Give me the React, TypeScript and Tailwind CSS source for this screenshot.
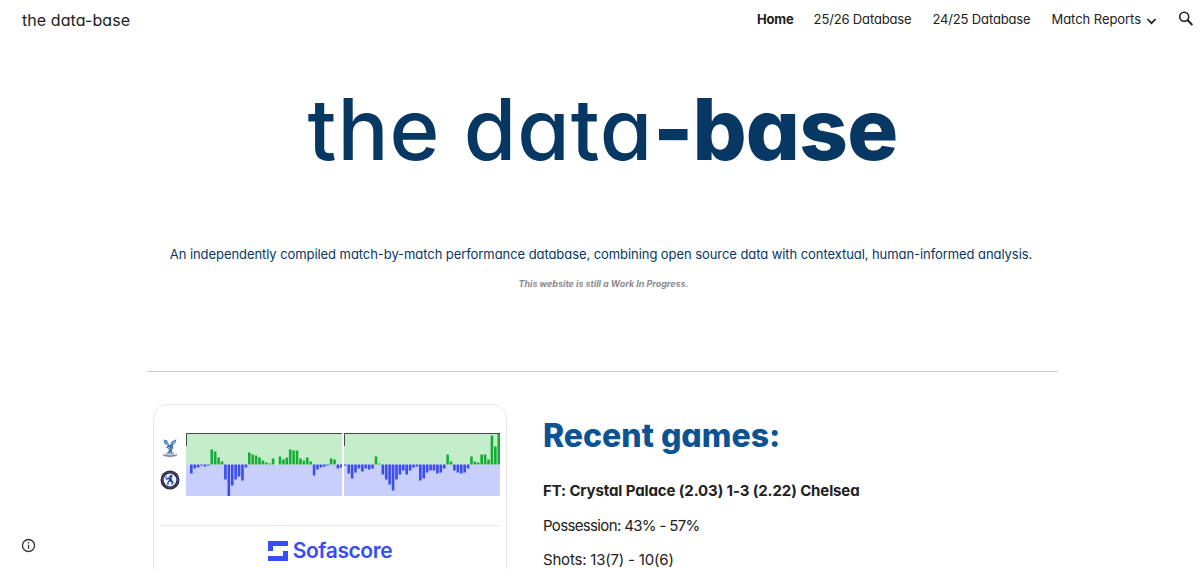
import React, { FC } from 'react';

interface MomentumHalfProps {
  values: number[];
  pad: number;
}

// Positive values belong to the home side, negative ones to the away side
const firstHalf = [
  0, -9, -4, -3, -1, -2, -1, 15, 13, 7, 3, -15, -32, -21, -15, -12, -16, -3,
  12, 10, 9, 7, 4, 2, 1, 6, 0, 8, 5, 7, 15, 14, 14, 6, 4, 7, 3, -11, -5, -3, -2,
  -1, 6, 5, -4, -3
];
const secondHalf = [
  -1, -9, -14, -8, -4, -7, -4, -5, -4, 8, 1, -10, -15, -20, -26, -15, -10, -6,
  -10, -6, -3, -2, -16, -14, -8, -6, -6, -9, -8, -4, 10, 3, -6, -8, -9, -8, -4,
  8, 3, 2, 10, 10, 5, 29, 18, 32
];

const MomentumHalf: FC<MomentumHalfProps> = ({ values, pad }) => {
  return (
    <svg width="156" height="63" viewBox="0 0 156 63" className="block">
      <rect width="156" height="31.5" fill="#c4edca" />
      <rect y="31.5" width="156" height="31.5" fill="#c9cffc" />
      {values.map((value, i) => (
        <rect
          key={i}
          x={pad + i * 3.41}
          y={value > 0 ? 31.5 - value : 31.5}
          width="2.6"
          height={Math.abs(value)}
          fill={value > 0 ? '#17ac38' : '#3b4ee8'}
        />
      ))}
      <path d="M0.5 13V0.5H156" fill="none" stroke="#444b47" />
    </svg>
  );
};

const PalaceCrest = () => {
  return (
    <svg width="16" height="20" viewBox="0 0 16 20">
      <path d="M1.5 1.5l3.5 1 2.4 4.5 1.4-1L10 3.2l4.5-2-1 3.6-2.6 2.4.4 2.6-1.5 2.2.7 3H5.6l1.6-3.4L4 9.2l2-1.4-3.4-2z" fill="#3c79b4" />
      <path d="M3.5 3.5l3 3.6M13 3l-2.8 3.3M6.5 9l2 2" stroke="#c8e3f2" strokeWidth="0.9" />
      <path d="M4 14.5h8v2H4z" fill="#86a9c6" />
      <path d="M1 15.4c4 2.4 10 2.4 14 0v2.4c-4 1.8-10 1.8-14 0z" fill="#cf9aa4" />
      <path d="M3 17.4q5 1.4 10 0" fill="none" stroke="#4f78a6" strokeWidth="0.9" />
    </svg>
  );
};

const ChelseaCrest = () => {
  return (
    <svg width="20" height="20" viewBox="0 0 20 20">
      <circle cx="10" cy="10" r="9.5" fill="#22244c" />
      <circle cx="10" cy="10" r="7.9" fill="none" stroke="#8b7990" strokeWidth="0.9" strokeDasharray="1.2 1" />
      <circle cx="10" cy="10" r="6.4" fill="#f0f4ff" />
      <path d="M9.5 5.2l2.3-.4 1 1.5-1.3 1.3.6 2.6 1.6 1.9-.9 2.2-1.6.5.5-2.2-2-1.2-1.2 1.2.4 1.8-2 .3.6-2.8 1.5-2-.6-.9-1.6.8-.6-1 2-1.5 1.4.2z" fill="#2a45a5" />
      <path d="M6.4 9.8L5.6 7.3 6.8 6" fill="none" stroke="#2a45a5" strokeWidth="0.9" />
    </svg>
  );
};

const Header = () => {
  return (
    <header className="flex h-10 items-center justify-between pl-[22px] pr-[6px] text-[#212121]">
      <span className="text-base tracking-[0.08px]">the data-base</span>
      <nav className="flex items-center text-[13px] tracking-[-0.15px]">
        <a className="mr-5 font-bold">Home</a>
        <a className="mr-[21px]">25/26 Database</a>
        <a className="mr-[21px]">24/25 Database</a>
        <a className="tracking-[-0.05px]">Match Reports</a>
        <svg className="mt-px ml-[5px] mr-[21px]" width="11" height="8" viewBox="0 0 11 8">
          <path d="M1.3 2l4.2 4.2L9.7 2" fill="none" stroke="currentColor" strokeWidth="1.7" />
        </svg>
        <svg className="-mt-0.5" width="16" height="16" viewBox="0 0 16 16">
          <circle cx="6.2" cy="5.7" r="4.5" fill="none" stroke="currentColor" strokeWidth="1.6" />
          <path d="M9.4 9l5 5" stroke="currentColor" strokeWidth="1.9" />
        </svg>
      </nav>
    </header>
  );
};

const MomentumCard = () => {
  return (
    <div className="h-[220px] w-[354px] rounded-[14px] border border-[#e8e8e8] px-[6px] pt-7">
      <div className="flex">
        <div className="flex w-[26px] flex-col items-start gap-3 pt-[5px]">
          <div className="pl-[2px]">
            <PalaceCrest />
          </div>
          <ChelseaCrest />
        </div>
        <MomentumHalf values={firstHalf} pad={0.6} />
        <div className="w-0.5" />
        <MomentumHalf values={secondHalf} pad={0} />
      </div>
      <div className="mt-[29px] border-t border-[#e8e8e8]" />
      <div className="mt-[13px] flex items-center justify-center gap-[5px] text-[#374df5]">
        <svg width="20" height="20" viewBox="0 0 20 20" fill="currentColor">
          <path d="M0 0h20v5H5v5H0zM20 20H0v-5h15v-5h5z" />
        </svg>
        <span className="text-[21px] leading-6 font-semibold tracking-[-0.4px] [font-feature-settings:normal]">
          Sofascore
        </span>
      </div>
    </div>
  );
};

const App = () => {
  return (
    <div className="relative h-[569px] overflow-hidden bg-white font-['Inter',sans-serif] [font-feature-settings:'cv11']">
      <Header />
      <main className="ml-[147px] flex w-[911px] flex-col">
        <h1 className="mt-[38px] text-center text-[85px] leading-[104px] font-medium tracking-[0.9px] whitespace-nowrap text-[#073763]">
          the data<span className="font-extrabold tracking-[-0.8px]">-base</span>
        </h1>
        <p className="mt-[62px] pr-[3px] text-center text-[13px] leading-5 tracking-[-0.07px] whitespace-nowrap text-[#073763]">
          An independently compiled match-by-match performance database, combining open source data with contextual, human-informed analysis.
        </p>
        <p className="mt-[12px] pl-[2px] text-center text-[9px] leading-4 font-bold tracking-[-0.03px] text-[#8c8c8c] italic">
          This website is still a Work In Progress.
        </p>
        <hr className="mt-[79px] border-[#cccccc]" />
        <section className="mt-8 flex pl-[6px]">
          <MomentumCard />
          <div className="ml-9 whitespace-nowrap text-[#212121]">
            <h2 className="mt-[12px] text-[32px] leading-10 font-extrabold text-[#0b5394]">Recent games:</h2>
            <p className="mt-[23px] text-[15px] leading-6 font-bold tracking-[-0.12px]">
              FT: Crystal Palace (2.03) 1-3 (2.22) Chelsea
            </p>
            <p className="mt-[11px] text-[15px] leading-6 tracking-[-0.65px]">Possession: 43% - 57%</p>
            <p className="mt-[14px] text-[15px] leading-4 tracking-[-0.2px]">Shots: 13(7) - 10(6)</p>
          </div>
        </section>
      </main>
      <svg className="absolute top-[538px] left-[21px]" width="15" height="15" viewBox="0 0 15 15">
        <circle cx="7.5" cy="7.5" r="6" fill="none" stroke="#333" strokeWidth="1.3" />
        <path d="M7.5 6.7v4M7.5 4.1v1.4" stroke="#333" strokeWidth="1.3" />
      </svg>
    </div>
  );
};

export default App;
